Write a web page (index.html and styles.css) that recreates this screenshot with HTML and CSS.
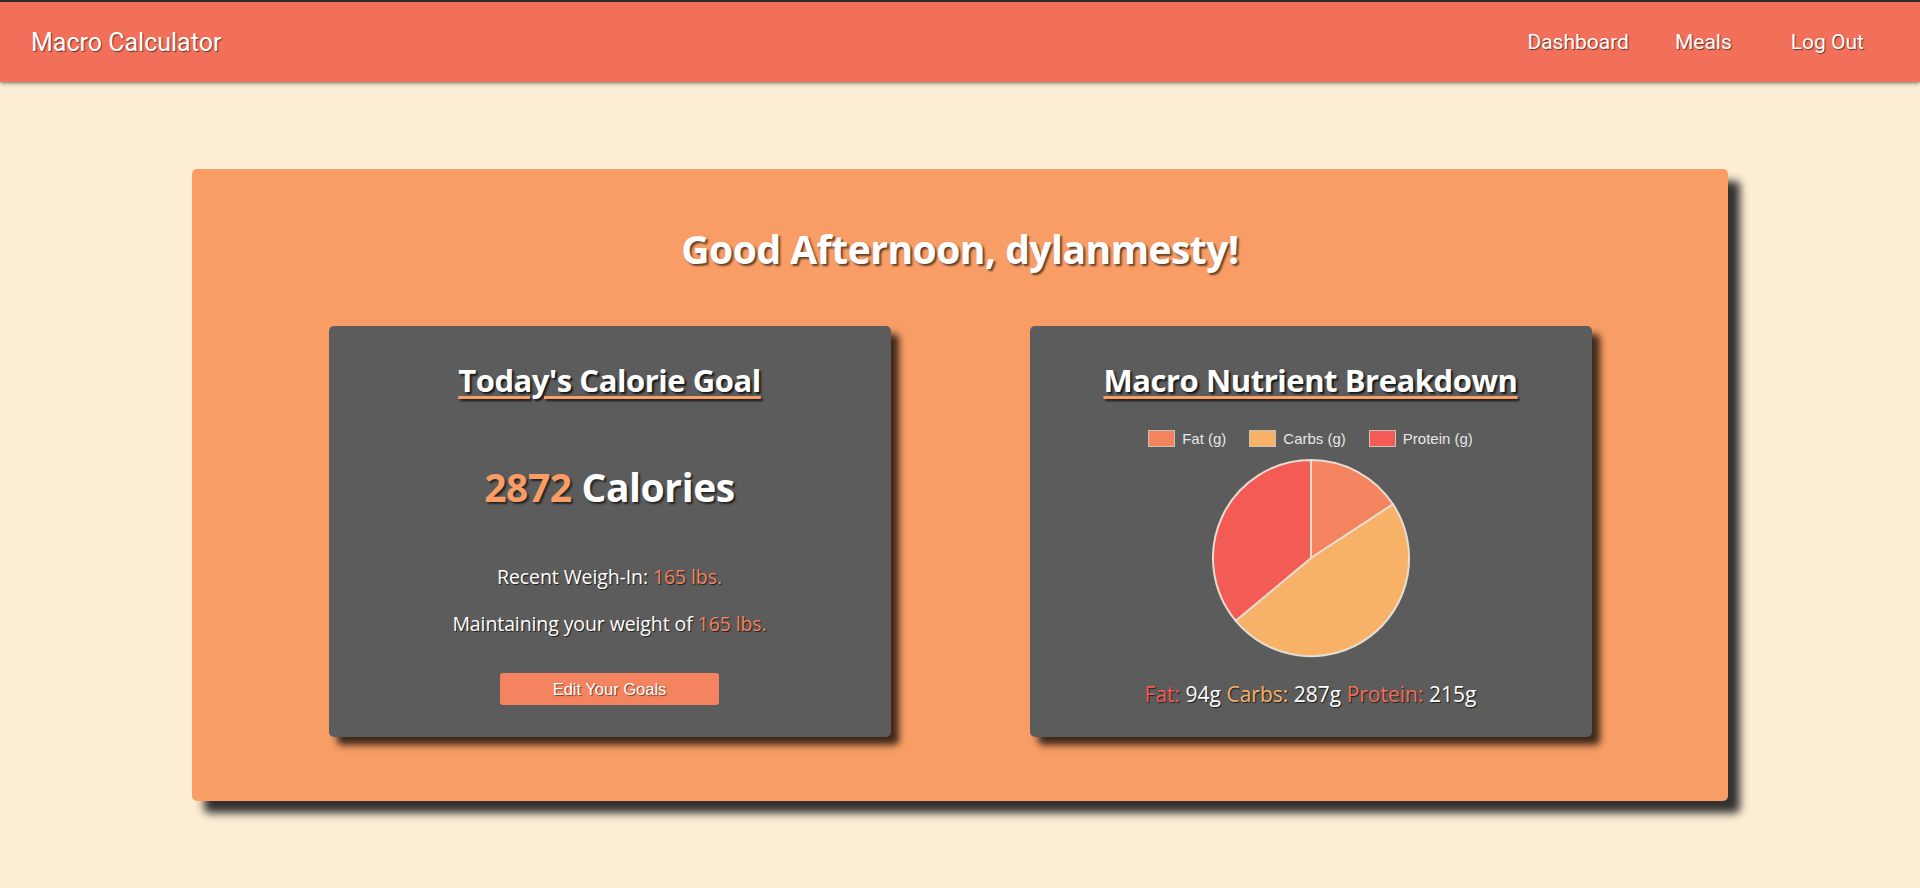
FILE: index.html
```html
<!DOCTYPE html>
<html lang="en">
<head>
<meta charset="utf-8">
<title>Macro Calculator</title>
<link rel="stylesheet" href="styles.css">
</head>
<body>
<header class="topbar">
  <nav class="nav">
    <a class="brand" href="#">Macro Calculator</a>
    <ul class="nav-links">
      <li><a class="nav-link" href="#">Dashboard</a></li>
      <li><a class="nav-link" href="#">Meals</a></li>
      <li><a class="nav-link nav-logout" href="#">Log Out</a></li>
    </ul>
  </nav>
</header>

<main class="page">
  <section class="board">
    <h1 class="greeting">Good Afternoon, dylanmesty!</h1>
    <div class="cards">
      <article class="card">
        <h2 class="card-title">Today's Calorie Goal</h2>
        <p class="calories"><span class="accent">2872</span> Calories</p>
        <p class="info info-first">Recent Weigh-In: <span class="weight">165 lbs.</span></p>
        <p class="info">Maintaining your weight of <span class="weight">165 lbs.</span></p>
        <button class="btn" type="button">Edit Your Goals</button>
      </article>

      <article class="card">
        <h2 class="card-title">Macro Nutrient Breakdown</h2>
        <ul class="legend">
          <li class="legend-item"><span class="swatch swatch-fat"></span>Fat (g)</li>
          <li class="legend-item"><span class="swatch swatch-carbs"></span>Carbs (g)</li>
          <li class="legend-item"><span class="swatch swatch-protein"></span>Protein (g)</li>
        </ul>
        <svg class="pie" width="200" height="200" viewBox="0 0 200 200">
          <path class="slice-fat" d="M100 100 L100 2 A98 98 0 0 1 181.99 46.31 Z"/>
          <path class="slice-carbs" d="M100 100 L181.99 46.31 A98 98 0 0 1 24.75 162.80 Z"/>
          <path class="slice-protein" d="M100 100 L24.75 162.80 A98 98 0 0 1 100 2 Z"/>
        </svg>
        <p class="macros"><span class="lbl-fat">Fat:</span> 94g <span class="lbl-carbs">Carbs:</span> 287g <span class="lbl-protein">Protein:</span> 215g</p>
      </article>
    </div>
  </section>
</main>
</body>
</html>
```

FILE: styles.css
```css
* { box-sizing: border-box; }

body {
  margin: 0;
  background: #fdedd5;
  font-family: "Open Sans", "Noto Sans", sans-serif;
  color: #fff;
  min-height: 888px;
}

.topbar {
  border-top: 2px solid #2b2b2b;
  background: #f27059;
  box-shadow: 0 2px 2px 0 rgba(0,0,0,0.14), 0 3px 1px -2px rgba(0,0,0,0.12), 0 1px 6px 0 rgba(0,0,0,0.25);
}

.nav {
  height: 80px;
  display: flex;
  align-items: center;
  justify-content: space-between;
  padding: 0 0 0 31px;
  font-family: Roboto, "Liberation Sans", sans-serif;
}

.brand {
  font-size: 25px;
  color: #fff;
  text-decoration: none;
  text-shadow: 1px 1px 1px rgba(0,0,0,0.55);
}

.nav-links {
  list-style: none;
  margin: 0;
  padding: 0 56px 0 0;
  display: flex;
  align-items: center;
}

.nav-link {
  display: block;
  font-size: 21px;
  color: #fff;
  text-decoration: none;
  margin-left: 46px;
  text-shadow: 1px 1px 1px rgba(0,0,0,0.55);
}

.nav-links li:first-child .nav-link { margin-left: 0; }

.nav-logout { margin-left: 59px; }

.page {
  padding: 87px 0 80px;
}

.board {
  width: 1536px;
  margin: 0 auto;
  background: #f79d65;
  border-radius: 5px;
  padding: 56px 0 64px;
  box-shadow: 12px 12px 9px rgba(40,40,40,0.95);
}

.greeting {
  margin: 0;
  text-align: center;
  font-size: 39px;
  line-height: 48px;
  font-weight: 700;
  letter-spacing: -0.5px;
  text-shadow: 2px 2px 2px rgba(0,0,0,0.6);
}

.cards {
  display: flex;
  justify-content: center;
  gap: 139px;
  margin-top: 53px;
}

.card {
  width: 562px;
  height: 411px;
  background: #5c5c5c;
  border-radius: 5px;
  box-shadow: 8px 8px 7px rgba(0,0,0,0.75);
  display: flex;
  flex-direction: column;
  align-items: center;
  padding-top: 34px;
}

.card-title {
  margin: 0;
  font-size: 31px;
  line-height: 40px;
  font-weight: 700;
  letter-spacing: -0.45px;
  text-decoration: underline;
  text-decoration-color: #f79d65;
  text-decoration-thickness: 3px;
  text-underline-offset: 4px;
  text-shadow: 2px 2px 2px rgba(0,0,0,0.75);
}

.calories {
  margin: 63px 0 0;
  font-size: 39px;
  line-height: 48px;
  font-weight: 700;
  letter-spacing: -0.4px;
  text-shadow: 2px 2px 2px rgba(0,0,0,0.6);
}

.accent { color: #f79d65; }

.info {
  margin: 23px 0 0;
  font-size: 19.5px;
  line-height: 24px;
  letter-spacing: -0.1px;
  text-shadow: 1px 1px 1px rgba(0,0,0,0.7);
}

.info-first { margin-top: 54px; }

.weight { color: #f4845f; }

.btn {
  margin-top: 37px;
  width: 219px;
  height: 32px;
  border: none;
  border-radius: 3px;
  background: #f4845f;
  color: #fff;
  font-family: "Liberation Sans", Arial, sans-serif;
  font-size: 16.5px;
  text-shadow: 1px 1px 1px rgba(0,0,0,0.55);
  padding: 0;
}

.legend {
  list-style: none;
  margin: 30px 0 0;
  padding: 0;
  display: flex;
  gap: 23px;
  font-family: "Liberation Sans", Arial, sans-serif;
  font-size: 15px;
  color: #e6e6e6;
}

.legend-item {
  display: flex;
  align-items: center;
  gap: 7px;
  height: 17px;
}

.swatch {
  width: 27px;
  height: 17px;
  border: 1px solid #c9c2bc;
}

.swatch-fat { background: #f4845f; }
.swatch-carbs { background: #f7b267; }
.swatch-protein { background: #f25c54; }

.pie {
  display: block;
  margin-top: 11px;
}

.pie path {
  stroke: #e6ddd3;
  stroke-width: 2;
  stroke-linejoin: round;
}

.slice-fat { fill: #f4845f; }
.slice-carbs { fill: #f7b267; }
.slice-protein { fill: #f25c54; }

.macros {
  margin: 22px 0 0;
  font-size: 21px;
  line-height: 28px;
  text-shadow: 1px 1px 1px rgba(0,0,0,0.7);
}

.lbl-fat { color: #f25c54; }
.lbl-carbs { color: #f7b267; }
.lbl-protein { color: #f27059; }
```
